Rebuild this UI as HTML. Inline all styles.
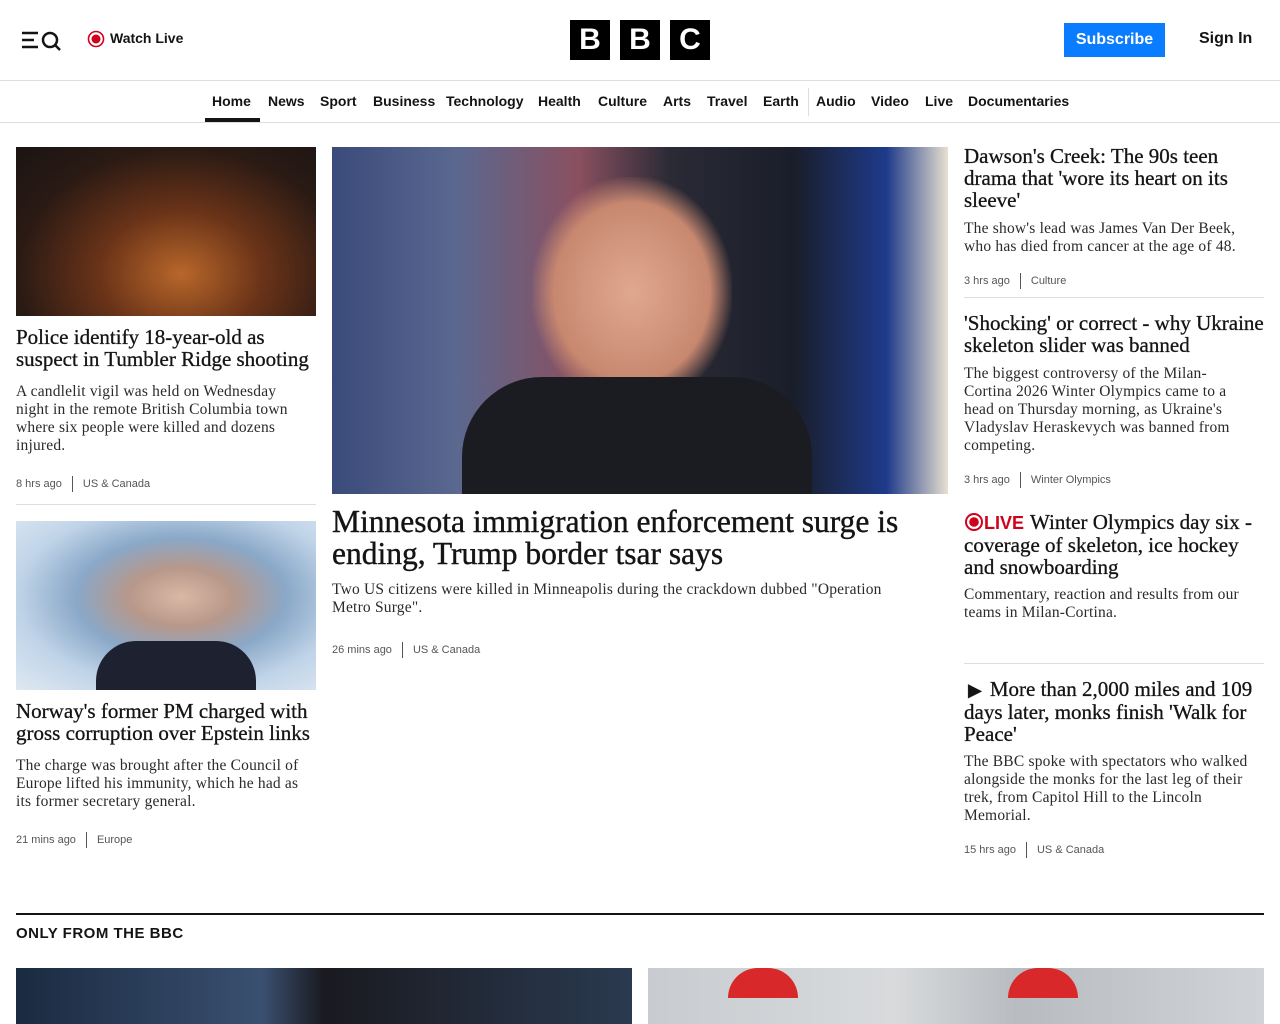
<!DOCTYPE html>
<html><head><meta charset="utf-8"><style>
*{margin:0;padding:0;box-sizing:border-box}
body{width:1280px;height:1024px;overflow:hidden;background:#fff;color:#141414;font-family:"Liberation Sans",sans-serif;position:relative}
.a{position:absolute}
.nav span{position:absolute;top:93px;font-size:14px;font-weight:bold;color:#141414}
.h{font-family:"Liberation Serif",serif;font-size:21px;line-height:22px;color:#141414;white-space:nowrap;-webkit-text-stroke:0.3px #141414}
.s{font-family:"Liberation Serif",serif;font-size:15.5px;line-height:18px;color:#2a2a2a;white-space:nowrap;letter-spacing:0.2px}
.m{font-size:11px;color:#545658}
.m i{display:inline-block;width:1px;height:16px;background:#545658;vertical-align:middle;margin:0 10px}
.rule{position:absolute;height:1px;background:#ddd}
</style></head><body>
<svg class="a" style="left:22px;top:31px" width="40" height="20" viewBox="0 0 40 20"><path d="M0 2h16M0 9h12M0 16h16" stroke="#141414" stroke-width="2.5"/><circle cx="28" cy="9" r="7" fill="none" stroke="#141414" stroke-width="2.5"/><path d="M33 14l5 5" stroke="#141414" stroke-width="2.5"/></svg>
<svg class="a" style="left:87px;top:30px" width="18" height="18"><circle cx="9" cy="9" r="7.5" fill="none" stroke="#d0021b" stroke-width="1.6"/><circle cx="9" cy="9" r="4.5" fill="#d0021b"/></svg>
<div class="a" style="left:110px;top:30px;font-size:14px;font-weight:bold">Watch Live</div>
<div class="a" style="left:570px;top:20px;width:40px;height:40px;background:#000;color:#fff;font-size:30px;font-weight:bold;text-align:center;line-height:40px">B</div>
<div class="a" style="left:620px;top:20px;width:40px;height:40px;background:#000;color:#fff;font-size:30px;font-weight:bold;text-align:center;line-height:40px">B</div>
<div class="a" style="left:670px;top:20px;width:40px;height:40px;background:#000;color:#fff;font-size:30px;font-weight:bold;text-align:center;line-height:40px">C</div>
<div class="a" style="left:1064px;top:23px;width:101px;height:34px;background:#0a7cff;color:#fff;font-size:16px;font-weight:bold;text-align:center;line-height:34px">Subscribe</div>
<div class="a" style="left:1199px;top:30px;font-size:16px;font-weight:bold">Sign In</div>
<div class="rule" style="left:0;top:80px;width:1280px"></div>
<div class="nav"><span style="left:212px">Home</span><span style="left:268px">News</span><span style="left:320px">Sport</span><span style="left:373px">Business</span><span style="left:446px">Technology</span><span style="left:538px">Health</span><span style="left:598px">Culture</span><span style="left:663px">Arts</span><span style="left:707px">Travel</span><span style="left:763px">Earth</span><span style="left:816px">Audio</span><span style="left:871px">Video</span><span style="left:925px">Live</span><span style="left:968px">Documentaries</span></div>
<div class="a" style="left:808px;top:88px;width:1px;height:28px;background:#ddd"></div>
<div class="a" style="left:205px;top:118px;width:55px;height:4px;background:#141414"></div>
<div class="rule" style="left:0;top:122px;width:1280px"></div>

<div class="a" style="left:16px;top:147px;width:300px;height:169px;background:radial-gradient(ellipse at 55% 75%,#b8672a 0%,#6a3318 35%,#2a1a14 70%,#1a1412 100%)"></div>
<div class="a h" style="left:16px;top:326px">Police identify 18-year-old as<br>suspect in Tumbler Ridge shooting</div>
<div class="a s" style="left:16px;top:383px">A candlelit vigil was held on Wednesday<br>night in the remote British Columbia town<br>where six people were killed and dozens<br>injured.</div>
<div class="a m" style="left:16px;top:476px">8 hrs ago<i></i>US &amp; Canada</div>
<div class="rule" style="left:16px;top:504px;width:300px"></div>
<div class="a" style="left:16px;top:521px;width:300px;height:169px;background:radial-gradient(ellipse at 55% 45%,#d9b8a5 0%,#b8988a 22%,#8aa8c8 45%,#c0d4e8 70%,#dfe8f2 100%)"><div style="position:absolute;left:80px;top:120px;width:160px;height:49px;background:#1e2230;border-radius:40px 40px 0 0"></div></div>
<div class="a h" style="left:16px;top:700px">Norway's former PM charged with<br>gross corruption over Epstein links</div>
<div class="a s" style="left:16px;top:757px">The charge was brought after the Council of<br>Europe lifted his immunity, which he had as<br>its former secretary general.</div>
<div class="a m" style="left:16px;top:832px">21 mins ago<i></i>Europe</div>

<div class="a" style="left:332px;top:147px;width:616px;height:347px;background:linear-gradient(90deg,#3a4a7a 0%,#5a6890 20%,#8a5060 40%,#2a2a35 55%,#1a1e2a 75%,#1e3a8a 90%,#e8e0d0 100%)"><div style="position:absolute;left:200px;top:30px;width:200px;height:230px;background:radial-gradient(ellipse,#e0a890 0%,#c88870 55%,transparent 72%)"></div><div style="position:absolute;left:130px;top:230px;width:350px;height:117px;background:#1a1c22;border-radius:80px 80px 0 0"></div></div>
<div class="a" style="left:332px;top:506px;white-space:nowrap;font-family:'Liberation Serif',serif;font-size:31.5px;line-height:32px;-webkit-text-stroke:0.4px #141414">Minnesota immigration enforcement surge is<br>ending, Trump border tsar says</div>
<div class="a s" style="left:332px;top:581px">Two US citizens were killed in Minneapolis during the crackdown dubbed "Operation<br>Metro Surge".</div>
<div class="a m" style="left:332px;top:642px">26 mins ago<i></i>US &amp; Canada</div>

<div class="a h" style="left:964px;top:145px">Dawson's Creek: The 90s teen<br>drama that 'wore its heart on its<br>sleeve'</div>
<div class="a s" style="left:964px;top:220px">The show's lead was James Van Der Beek,<br>who has died from cancer at the age of 48.</div>
<div class="a m" style="left:964px;top:273px">3 hrs ago<i></i>Culture</div>
<div class="rule" style="left:964px;top:297px;width:300px"></div>
<div class="a h" style="left:964px;top:312px">'Shocking' or correct - why Ukraine<br>skeleton slider was banned</div>
<div class="a s" style="left:964px;top:365px">The biggest controversy of the Milan-<br>Cortina 2026 Winter Olympics came to a<br>head on Thursday morning, as Ukraine's<br>Vladyslav Heraskevych was banned from<br>competing.</div>
<div class="a m" style="left:964px;top:472px">3 hrs ago<i></i>Winter Olympics</div>
<div class="a h" style="left:964px;top:511px"><svg width="20" height="18" style="vertical-align:-2px"><circle cx="10" cy="9" r="8" fill="none" stroke="#d0021b" stroke-width="2"/><circle cx="10" cy="9" r="4.8" fill="#d0021b"/></svg><span style="font-family:'Liberation Sans',sans-serif;font-weight:bold;color:#d0021b;font-size:18px;margin-right:6px;-webkit-text-stroke:0">LIVE</span>Winter Olympics day six -<br>coverage of skeleton, ice hockey<br>and snowboarding</div>
<div class="a s" style="left:964px;top:586px">Commentary, reaction and results from our<br>teams in Milan-Cortina.</div>
<div class="rule" style="left:964px;top:663px;width:300px"></div>
<div class="a h" style="left:964px;top:678px"><span style="font-size:18px;margin:0 8px 0 4px">&#9654;</span>More than 2,000 miles and 109<br>days later, monks finish 'Walk for<br>Peace'</div>
<div class="a s" style="left:964px;top:753px">The BBC spoke with spectators who walked<br>alongside the monks for the last leg of their<br>trek, from Capitol Hill to the Lincoln<br>Memorial.</div>
<div class="a m" style="left:964px;top:842px">15 hrs ago<i></i>US &amp; Canada</div>

<div class="a" style="left:16px;top:913px;width:1248px;height:2px;background:#141414"></div>
<div class="a" style="left:16px;top:925px;font-size:15px;font-weight:bold;letter-spacing:0.5px">ONLY FROM THE BBC</div>
<div class="a" style="left:16px;top:968px;width:616px;height:56px;background:linear-gradient(90deg,#1a2a40,#3a5070 40%,#1a1a20 50%,#2a3a50)"></div>
<div class="a" style="left:648px;top:968px;width:616px;height:56px;background:linear-gradient(90deg,#c8ccd0,#d8dadc 40%,#b8bcc0 60%,#d0d4d8)"><div style="position:absolute;left:80px;top:0;width:70px;height:30px;background:#d8282a;border-radius:30px 30px 0 0"></div><div style="position:absolute;left:360px;top:0;width:70px;height:30px;background:#d8282a;border-radius:30px 30px 0 0"></div></div>
</body></html>
